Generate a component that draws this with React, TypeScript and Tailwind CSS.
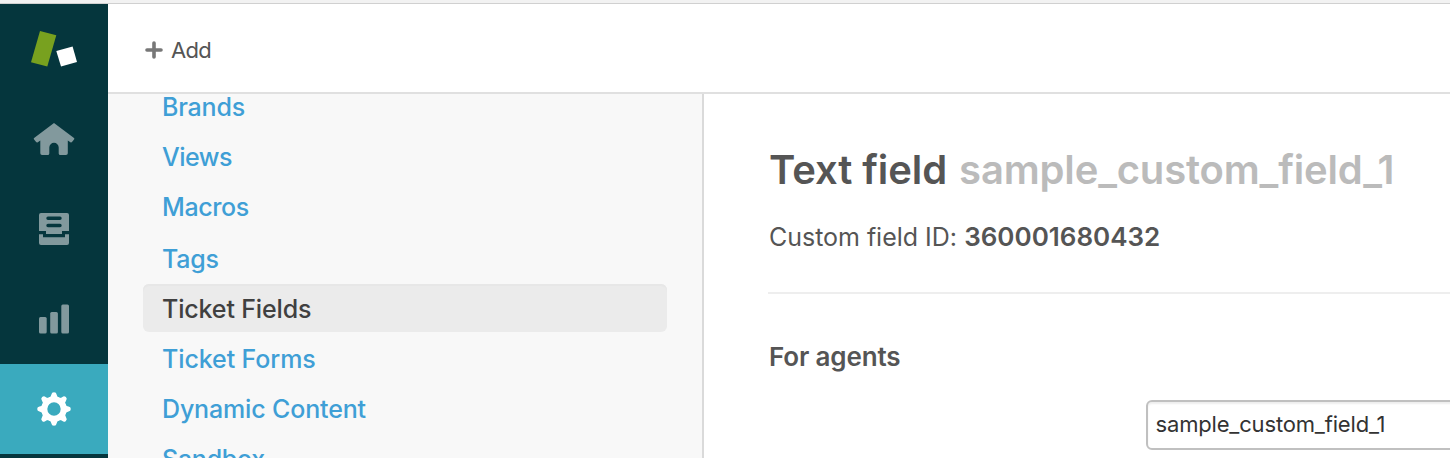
import type { ReactNode } from "react";

function RailItem({ label, y, active, children }: { label: string; y: number; active?: boolean; children: ReactNode }) {
  return (
    <button aria-label={label} className={active ? "h-[90px] w-full shrink-0 bg-[#3aaabe]" : "h-[90px] w-full shrink-0"}>
      <svg width="108" height="90" viewBox={`0 ${y} 108 90`} className="block" fill={active ? "#fff" : "#82999d"}>
        {children}
      </svg>
    </button>
  );
}

const teeth = [0, 45, 90, 135, 180, 225, 270, 315];

const links = [
  { name: "Brands", style: "text-[#3f9fd6] tracking-[-0.2px]" },
  { name: "Views", style: "text-[#3f9fd6] tracking-[-0.5px]" },
  { name: "Macros", style: "text-[#3f9fd6] tracking-[-0.4px]" },
  { name: "Tags", style: "mt-[2px] text-[#3f9fd6] tracking-[-0.25px]" },
  { name: "Ticket Fields", style: "bg-[#ebebeb] text-[#404040] tracking-[-0.15px] shadow-[inset_0_2px_1px_#e7e7e7]" },
  { name: "Ticket Forms", style: "text-[#3f9fd6] tracking-[-0.1px]" },
  { name: "Dynamic Content", style: "text-[#3f9fd6] tracking-[-0.15px]" },
  { name: "Sandbox", style: "text-[#3f9fd6] tracking-[-0.25px]" },
];

export default function App() {
  return (
    <div className="flex h-[458px] w-[1450px] flex-col overflow-hidden bg-white font-['Inter',sans-serif] font-[430] text-[#555]">
      <div className="h-1 shrink-0 border-b border-[#d0d0d0] bg-[#f2f2f2]" />
      <div className="flex min-h-0 flex-1">
        <nav className="flex w-[108px] shrink-0 flex-col overflow-hidden bg-[#05363d]">
          <RailItem label="Dashboard" y={4}>
            <path d="M40 31 56.3 35.2 47.3 66.4 31 62.3Z" fill="#78a11f" />
            <path d="M56.3 51 72.6 46.4 77 62 61 66.5Z" fill="#fff" />
          </RailItem>
          <RailItem label="Home" y={94}>
            <path d="M54 123 74 138Q74.6 138.6 74.2 139.3L72 142Q71.3 142.8 70.4 142.2L67.8 140.4V153.3Q67.8 155 66 155H60.3Q58.7 155 58.7 153.4V147.5A4.7 4.7 0 0 0 49.3 147.5V153.4Q49.3 155 47.7 155H42Q40.3 155 40.3 153.3V140.4L37.8 142.2Q36.8 142.8 36.1 142L33.9 139.3Q33.4 138.6 34.1 138Z" />
          </RailItem>
          <RailItem label="Views" y={184}>
            <path fillRule="evenodd" d="M41 213H67Q69 213 69 215V231H62V234H46V231H39V215Q39 213 41 213ZM48 216.6A1.6 1.6 0 0 0 48 220H60A1.6 1.6 0 0 0 60 216.6ZM48 223.8A1.6 1.6 0 0 0 48 227.2H60A1.6 1.6 0 0 0 60 223.8Z" />
            <path d="M39 234.3H43V237.3H65V234.3H69V243Q69 245 67 245H41Q39 245 39 243Z" />
          </RailItem>
          <RailItem label="Reporting" y={274}>
            <rect x="39" y="317" width="7.7" height="16.5" rx="1.5" />
            <rect x="50.2" y="312" width="7.7" height="21.5" rx="1.5" />
            <rect x="61.3" y="304.5" width="7.7" height="29" rx="1.5" />
          </RailItem>
          <RailItem label="Admin" y={364} active>
            <circle cx="54" cy="409" r="9.7" fill="none" stroke="#fff" strokeWidth="6" />
            {teeth.map((a) => (
              <path key={a} transform={`rotate(${a} 54 409)`} d="M48.2 398.5Q51.2 397 51.4 394.5Q51.6 392.2 54 392.2T56.6 394.5Q56.8 397 59.8 398.5Z" />
            ))}
          </RailItem>
        </nav>
        <div className="flex min-w-0 flex-1 flex-col">
          <header className="flex h-[90px] shrink-0 items-center border-b-2 border-[#e0e0e0] pt-1 pl-[37px]">
            <svg width="18" height="18" viewBox="0 0 18 18" stroke="#777" strokeWidth="3.6" strokeLinecap="round">
              <path d="M9 2V16M2 9H16" />
            </svg>
            <span className="ml-2 text-[22px] leading-[30px] tracking-[-0.7px]">Add</span>
          </header>
          <div className="flex min-h-0 flex-1">
            <aside className="w-[596px] shrink-0 overflow-hidden border-r-2 border-[#dadada] bg-[#f8f8f8] px-[35px]">
              <ul className="-mt-3 flex flex-col gap-[2px] font-[450]">
                {links.map((l) => (
                  <li key={l.name} className={`h-12 w-[524px] shrink-0 rounded-md pl-[19px] text-[25px] leading-[50px] whitespace-nowrap ${l.style}`}>
                    <span>{l.name}</span>
                  </li>
                ))}
              </ul>
            </aside>
            <main className="flex min-w-0 flex-1 flex-col overflow-hidden pl-16">
              <h1 className="mt-[52px] ml-px text-[40px] leading-[48px] font-semibold whitespace-nowrap">
                <span className="mr-[2px] tracking-[-0.1px]">Text field</span> <span className="tracking-[-0.17px] text-[#bbb]">sample_custom_field_1</span>
              </h1>
              <p className="mt-[27px] ml-px text-[26px] leading-[32px] whitespace-nowrap">
                <span className="text-[25px] tracking-[-0.03px]">Custom field ID:</span> <strong className="font-semibold">360001680432</strong>
              </p>
              <hr className="mt-[39px] border-t-2 border-[#eee]" />
              <h2 className="mt-[47px] ml-px text-[26px] leading-[32px] font-semibold tracking-[-0.15px]">For agents</h2>
              <div className="mt-[27px] ml-[378px] h-[50px] w-[400px] shrink-0 rounded-md border-2 border-[#c0c0c0] px-[7.5px] text-[22px] leading-[44px] tracking-[-0.17px] whitespace-nowrap text-[#333] shadow-[inset_0_2px_2px_#eee]">
                sample_custom_field_1
              </div>
            </main>
          </div>
        </div>
      </div>
    </div>
  );
}
